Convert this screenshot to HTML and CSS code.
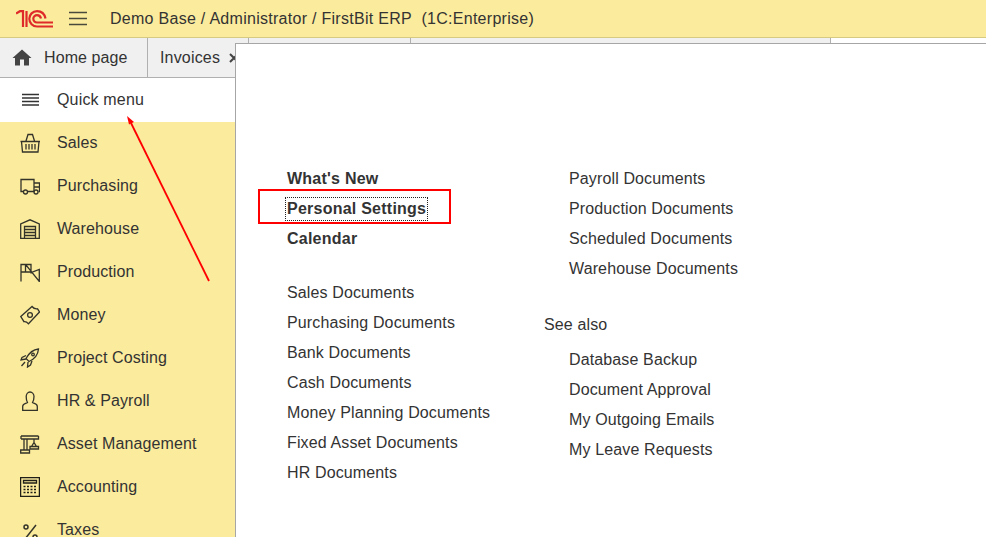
FILE: index.html
```html
<!DOCTYPE html>
<html lang="en">
<head>
<meta charset="utf-8">
<title>FirstBit ERP</title>
<link rel="stylesheet" href="styles.css">
</head>
<body>
<header class="topbar">
  <svg class="logo" width="37" height="18" viewBox="0 0 37 18" fill="none" stroke="#df2a2a" stroke-width="2.200">
    <path d="M0 3.500 L4 1.200 H7 V17"/>
    <path d="M10.500 17 V1"/>
    <path d="M37 16.500 H21 a7.700 7.700 0 1 1 0 -15.400 C26 1.100 28.500 3.500 29.500 8.500"/>
    <path d="M37 12.500 H21 a3.700 3.700 0 1 1 0 -7.400 C23 5.100 24.500 6 25 8.500"/>
  </svg>
  <svg class="burger" width="19" height="15" viewBox="0 0 19 15" stroke="#4a4a3c" stroke-width="1.400"><path d="M0 1.500H18M0 7.500H18M0 13.500H18"/></svg>
  <span class="title">Demo Base / Administrator / FirstBit ERP&nbsp;&nbsp;(1C:Enterprise)</span>
</header>
<div class="app">
  <aside class="side">
    <nav class="tabs">
      <a class="tab tab-home">
        <svg width="20" height="17" viewBox="0 0 20 17" fill="#444"><path d="M10 0.500 L19.500 9 H17 V16.500 H12 V10.500 H8 V16.500 H3 V9 H0.500 Z"/></svg>
        <span>Home page</span>
      </a>
      <a class="tab tab-inv"><span>Invoices</span>
        <svg class="close" width="10" height="10" viewBox="0 0 10 10" stroke="#444" stroke-width="2" fill="none"><path d="M1 1 9 9M9 1 1 9"/></svg>
      </a>
    </nav>
    <ul class="menu">
      <li class="item quick">
        <svg class="ico" viewBox="0 0 20 20" fill="none" stroke="#333" stroke-width="1.300"><path d="M2 4.500H19M2 8H19M2 11.500H19M2 15H19"/></svg>
        <span>Quick menu</span>
      </li>
      <li class="item">
        <svg class="ico" viewBox="0 0 20 20" fill="none" stroke="#33332a" stroke-width="1.300"><path d="M.5 8.500H20M1.500 8.500 2.500 19H18L19 8.500M6 8 8 1.500H12.500L14.500 8M6 11V16.500M9 11V16.500M12 11V16.500M15 11V16.500"/></svg>
        <span>Sales</span>
      </li>
      <li class="item">
        <svg class="ico" viewBox="0 0 20 20" fill="none" stroke="#33332a" stroke-width="1.300"><path d="M3.500 15.500H1V3.500H14V15.500H8M14 7H19.500V15.500H18.500M14 11H19.500M14 15.500H14.500"/><circle cx="5.500" cy="16" r="2"/><circle cx="16" cy="16" r="2"/></svg>
        <span>Purchasing</span>
      </li>
      <li class="item">
        <svg class="ico" viewBox="0 0 20 20" fill="none" stroke="#33332a" stroke-width="1.300"><path d="M.7 19.400V5L10 .8 19.300 5V19.400ZM4.500 19V7.500H15.500V19M4.500 10.500H15.500M4.500 13.500H15.500M4.500 16.500H15.500"/></svg>
        <span>Warehouse</span>
      </li>
      <li class="item">
        <svg class="ico" viewBox="0 0 20 20" fill="none" stroke="#33332a" stroke-width="1.300"><path d="M1 19.500V2.500H5.500V10M5.500 2.500H11V10.500L19.300 7.500V19.500ZM1 10H11"/></svg>
        <span>Production</span>
      </li>
      <li class="item">
        <svg class="ico" viewBox="0 0 20 20" fill="none" stroke="#33332a" stroke-width="1.300"><path d="M.8 11.500 12 1.500C13.500 3.500 16 4 17.500 3.800L19.500 7 8.500 18.800C7 17 5.500 16.500 4 16.700Z"/><circle cx="10" cy="10" r="2.400"/></svg>
        <span>Money</span>
      </li>
      <li class="item">
        <svg class="ico" viewBox="0 0 20 20" fill="none" stroke="#33332a" stroke-width="1.300"><path d="M18.500 1C13 1.500 9 5 6 10.500L9 13.500C14.500 11 18 7 18.500 1ZM6 7.500 2 9.500 1 12 6 11M12 13 10.500 17 7.500 19 8 14M5 14 1.500 18"/><circle cx="13" cy="6.500" r="1.300"/></svg>
        <span>Project Costing</span>
      </li>
      <li class="item">
        <svg class="ico" viewBox="0 0 20 20" fill="none" stroke="#33332a" stroke-width="1.300"><path d="M2.700 19.500V15.500C2.700 12.500 6 12.800 7.500 11.500 6.500 10 6.200 8 6.200 5.500 6.200 3 7.800 1 10 1S14 3 14 5.500C14 8 13.500 10 12.500 11.500 14 12.800 17.300 12.500 17.300 15.500V19.500Z"/></svg>
        <span>HR &amp; Payroll</span>
      </li>
      <li class="item">
        <svg class="ico" viewBox="0 0 20 20" fill="none" stroke="#33332a" stroke-width="1.300"><path d="M1 2H18.500M1 5H18.500V2M1 2V5M4 5V16M7 5V16M.7 16H9.500V19H.7ZM14 5V8M11.500 12.500 14 8.500 16.500 12.500ZM10 12.500H18.500V15H10Z"/></svg>
        <span>Asset Management</span>
      </li>
      <li class="item">
        <svg class="ico" viewBox="0 0 20 20" fill="none" stroke="#1f1f18" stroke-width="1.300"><path d="M.6 .6H19.400V19.400H.6ZM3.500 3.500H16.500V6H3.500Z"/><path stroke-dasharray="2 1.500" d="M3.500 9.500H17M3.500 12.500H17M3.500 15.500H17"/></svg>
        <span>Accounting</span>
      </li>
      <li class="item">
        <svg class="ico" viewBox="0 0 20 20" fill="none" stroke="#33332a" stroke-width="1.500"><path d="M5 19 16 5"/><circle cx="6" cy="7" r="2"/><circle cx="15" cy="17" r="2"/></svg>
        <span>Taxes</span>
      </li>
    </ul>
  </aside>
  <div class="work">
    <div class="strip">
      <i class="seg seg-a"></i><i class="seg seg-b"></i><i class="seg seg-c"></i>
    </div>
    <main class="panel">
      <div class="col col-left">
        <ul class="links bold">
          <li>What's New</li>
          <li><span class="focus">Personal Settings</span></li>
          <li>Calendar</li>
        </ul>
        <ul class="links">
          <li>Sales Documents</li>
          <li>Purchasing Documents</li>
          <li>Bank Documents</li>
          <li>Cash Documents</li>
          <li>Money Planning Documents</li>
          <li>Fixed Asset Documents</li>
          <li>HR Documents</li>
        </ul>
      </div>
      <div class="col col-right">
        <ul class="links">
          <li>Payroll Documents</li>
          <li>Production Documents</li>
          <li>Scheduled Documents</li>
          <li>Warehouse Documents</li>
        </ul>
        <div class="see">See also</div>
        <ul class="links">
          <li>Database Backup</li>
          <li>Document Approval</li>
          <li>My Outgoing Emails</li>
          <li>My Leave Requests</li>
        </ul>
      </div>
    </main>
  </div>
</div>
<div class="mark-box"></div>
<svg class="mark-arrow" width="90" height="170" viewBox="0 0 90 170" fill="none">
  <path d="M84 166 L6 8" stroke="#f00" stroke-width="1.800"/>
  <path d="M2 1 L9 7 L4 9.500 Z" fill="#f00"/>
</svg>
</body>
</html>
```
FILE: styles.css
```css
* { box-sizing: border-box; }
html, body { margin: 0; height: 100%; }
body {
  width: 986px;
  height: 537px;
  overflow: hidden;
  position: relative;
  font: 16px/20px "Liberation Sans", Arial, sans-serif;
  letter-spacing: .13px;
  color: #333;
  background: #fff;
}
ul { list-style: none; margin: 0; padding: 0; }

.topbar {
  height: 38px;
  display: flex;
  align-items: center;
  background: #fbeb9d;
  border-bottom: 1px solid #d6ca82;
  padding-left: 16px;
}
.logo { flex: none; }
.burger { margin-left: 16px; flex: none; }
.title { margin-left: 22px; white-space: pre; letter-spacing: .28px; }

.app { display: flex; height: 499px; }
.side { width: 235px; flex: none; overflow: hidden; background: #fbeb9d; letter-spacing: .1px; }

.tabs {
  height: 40px;
  display: flex;
  background: #f0f0f0;
  border-bottom: 1px solid #b0b0b0;
}
.tab { display: flex; align-items: center; flex: none; height: 39px; white-space: nowrap; }
.tab-home { width: 148px; padding-left: 12px; gap: 12px; border-right: 1px solid #b0b0b0; }
.tab-inv { padding-left: 12px; gap: 9px; letter-spacing: .17px; }
.close { flex: none; }

.menu { height: 459px; }
.item {
  height: 43px;
  display: flex;
  align-items: center;
  padding: 0 0 2px 20px;
  gap: 17px;
}
.quick { height: 44px; padding-bottom: 0; background: #fff; letter-spacing: .17px; }
.ico { width: 20px; height: 20px; flex: none; }

.work { flex: 1; display: flex; flex-direction: column; min-width: 0; }
.strip { height: 5px; display: flex; background: #f0f0f0; }
.seg { display: block; height: 5px; border-right: 1px solid #b0b0b0; flex: none; }
.seg-a { width: 14px; }
.seg-b { width: 162px; }
.seg-c { width: 420px; }
.strip::after { content: ""; flex: 1; background: #fff; }

.panel {
  flex: 1;
  display: flex;
  background: #fff;
  border-top: 1px solid #a6a6a6;
  border-left: 1px solid #a6a6a6;
  padding: 120px 0 0 51px;
}
.col-left { width: 257px; display: flex; flex-direction: column; gap: 24px; }
.col-right { display: flex; flex-direction: column; }
.links li { height: 30px; line-height: 30px; white-space: nowrap; }
.bold { font-weight: 700; letter-spacing: .24px; }
.col-right .links { padding-left: 25px; }
.see { margin: 26px 0 5px; height: 30px; line-height: 30px; }
.focus {
  display: inline-block;
  height: 20px;
  line-height: 20px;
  outline: 1px dotted #222;
  outline-offset: 1px;
}

.mark-box {
  position: absolute;
  left: 258px;
  top: 189px;
  width: 193px;
  height: 35px;
  border: 2px solid #f00;
}
.mark-arrow { position: absolute; left: 125px; top: 115px; }
```
